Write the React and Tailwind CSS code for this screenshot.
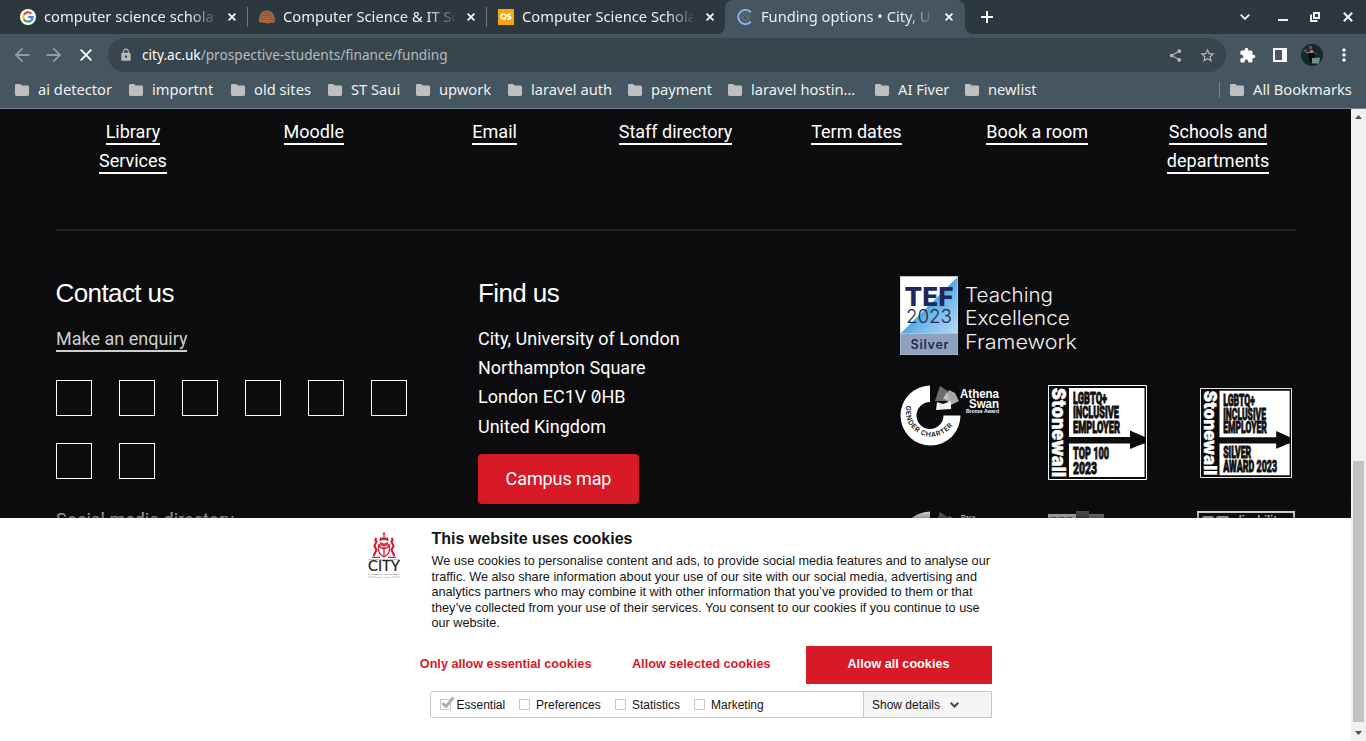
import React from "react";
import {
  MdArrowBack, MdArrowForward, MdClose, MdLock, MdShare, MdStarBorder,
  MdExtension, MdMoreVert,
} from "react-icons/md";

function GoogleIcon() {
  return (
    <svg viewBox="0 0 16 16" className="size-4 shrink-0">
      <circle cx="8" cy="8" r="8" fill="#fff" />
      <g fill="none" strokeWidth="2.1">
        <path d="M11.4 4.7A4.7 4.7 0 0 0 3.9 5.8" stroke="#ea4335" />
        <path d="M3.9 5.8a4.7 4.7 0 0 0 0 4.4" stroke="#fbbc05" />
        <path d="M3.9 10.2a4.7 4.7 0 0 0 7.1 1.4" stroke="#34a853" />
        <path d="M11 11.6A4.7 4.7 0 0 0 12.7 8.1H8.1" stroke="#4285f4" />
      </g>
    </svg>
  );
}

function ShellIcon() {
  return (
    <svg viewBox="0 0 16 16" className="size-4 shrink-0">
      <path d="M0 13C0 5 3 1.500 8 1.500S16 6 16 13.500L9 14.500Z" fill="#b86f45" />
      <g fill="none" stroke="#5d4030" strokeWidth=".6">
        <path d="M1 11.500q7-3 15 1M1 9.500q7-3 14 1M1.500 7.500q6-3 13 1M2.500 5.500q5-2.500 11 1M4 3.500q4-1.500 8 .5M3 13.500q6-2 11 .5" />
      </g>
    </svg>
  );
}

function QsIcon() {
  return (
    <svg viewBox="0 0 16 16" className="size-4 shrink-0">
      <path d="M0 0h16v16H0z" fill="#f9a50b" />
      <g fill="none" stroke="#fff" strokeWidth="1.500">
        <circle cx="5.500" cy="7.500" r="2.400" />
        <path d="M5.500 8.500l2 2M12.800 5.500c-3.600-1.100-4.200 1.300-1.900 1.900 3.300.8 1.900 3.300-1.900 2.200" />
      </g>
    </svg>
  );
}

function LoadingIcon() {
  return (
    <svg viewBox="0 0 16 16" className="size-4 shrink-0">
      <circle cx="8.500" cy="8" r="5" fill="#5b666d" />
      <path d="M6 6.500q2 .5 2 2t2 1.500M8.500 4.500l2 1.500" stroke="#414d55" fill="none" />
      <path d="M13.800 3.400A7.100 7.100 0 1 0 13.800 12.600" fill="none" stroke="#8ab4f8" strokeWidth="1.900" />
    </svg>
  );
}

const tabs = [
  { title: "computer science scholarships", Icon: GoogleIcon },
  { title: "Computer Science & IT Scholarships", Icon: ShellIcon, divided: true },
  { title: "Computer Science Scholarships", Icon: QsIcon, divided: true },
  { title: "Funding options • City, University", Icon: LoadingIcon, active: true },
];

function Tab({ title, Icon, active, divided }) {
  return (
    <div className={"relative flex h-[34px] shrink-0 items-center pl-3 " + (active ? "w-[240px] rounded-t-lg bg-[#455660]" : "w-[239px]")}>
      {divided && <span className="absolute left-0 top-[7px] h-5 w-px bg-[#6b757b]" />}
      {active && (
        <>
          <svg className="absolute -left-2 bottom-0 size-2" viewBox="0 0 8 8"><path d="M8 0v8H0a8 8 0 0 0 8-8" fill="#455660" /></svg>
          <svg className="absolute -right-2 bottom-0 size-2" viewBox="0 0 8 8"><path d="M0 0v8h8a8 8 0 0 1-8-8" fill="#455660" /></svg>
        </>
      )}
      <Icon />
      <span className="ml-2 w-[171px] overflow-hidden pb-px text-[14.700px] whitespace-nowrap text-[#eceeef] [mask-image:linear-gradient(to_right,black_145px,transparent_174px)]">{title}</span>
      <svg viewBox="0 0 8 8" className="ml-[13px] size-2"><path d="M.6.6l6.800 6.800M7.400.6L.6 7.400" stroke="#fff" strokeWidth="1.700" /></svg>
    </div>
  );
}

const bookmarks = [
  ["ai detector", "w-[114px]"], ["importnt", "w-[102px]"], ["old sites", "w-[97px]"],
  ["ST Saui", "w-[88px]"], ["upwork", "w-[92px]"], ["laravel auth", "w-[120px]"],
  ["payment", "w-[100px]"], ["laravel hostin…", "w-[147px]"], ["AI Fiver", "w-[90px]"], ["newlist", "w-[90px]"],
];

function Folder() {
  return (
    <svg viewBox="0 0 14 12" className="h-3 w-3.5 shrink-0">
      <path d="M1.400 0H5.300L6.800 1.600H12.600Q14 1.600 14 3V10.600Q14 12 12.600 12H1.400Q0 12 0 10.600V1.400Q0 0 1.400 0Z" fill="#bfbfc1" />
    </svg>
  );
}

function Browser() {
  return (
    <header className="h-[109px] border-b border-[#71848c] bg-[#455660] font-['Noto_Sans',sans-serif]">
      <div className="flex h-[34px] bg-[#2d383e] pl-2">
        {tabs.map((t) => <Tab key={t.title} {...t} />)}
        <div className="flex flex-1 items-center pl-4 text-[#f0f1f2]">
          <svg viewBox="0 0 12 12" className="size-3"><path d="M6 0v12M0 6h12" stroke="#fff" strokeWidth="2" /></svg>
          <svg viewBox="0 0 10 6" className="ml-[247px] h-1.5 w-2.5"><path d="M.7.7L5 5 9.300.7" fill="none" stroke="currentColor" strokeWidth="1.800" /></svg>
          <svg viewBox="0 0 10 10" className="ml-[28px] size-[10px]"><path d="M0 7h10v2H0z" fill="currentColor" /></svg>
          <svg viewBox="0 0 10 10" className="ml-[22px] size-[10px]" fill="none" stroke="currentColor" strokeWidth="2">
            <path d="M4 1h5v5H4zM1 2.500V9h6.500" />
          </svg>
          <svg viewBox="0 0 10 10" className="ml-[23px] size-[10px]"><path d="M.8.8l8.400 8.400M9.200.8L.8 9.200" stroke="currentColor" strokeWidth="2" /></svg>
        </div>
      </div>
      <div className="flex h-[38px] items-center pt-1 pl-[11px] text-[#929ca2]">
        <MdArrowBack className="size-[22px]" />
        <MdArrowForward className="ml-[10px] size-[22px]" />
        <svg viewBox="0 0 12 12" className="mr-[5px] ml-[15px] size-3"><path d="M.7.700l10.600 10.600M11.300.7L.7 11.300" stroke="#fff" strokeWidth="1.900" /></svg>
        <div className="ml-[11px] flex h-[34px] w-[1118px] items-center rounded-full bg-[#39454c] pr-[10px] pl-[11px] text-[#b4bbbf]">
          <MdLock className="size-[14px]" />
          <p className="ml-[9px] text-[13.650px]"><span className="text-white">city.ac.uk</span>/prospective-students/finance/funding</p>
          <MdShare className="ml-auto size-[15px]" />
          <MdStarBorder className="ml-[16px] size-[17px]" />
        </div>
        <div className="flex items-center text-white">
          <MdExtension className="ml-[13px] size-[17px]" />
          <svg viewBox="0 0 14 14" className="ml-[17px] size-3.5"><path d="M0 0h14v14H0zM2 2v10h7V2z" fill="currentColor" fillRule="evenodd" /></svg>
          <svg viewBox="0 0 22 22" className="ml-3.5 size-[22px]">
            <circle cx="11" cy="11" r="11" fill="#142a2c" />
            <path d="M2 6.500l4-2v2l-4 1zM8 2h3v3H8z" fill="#4c6364" />
            <path d="M3 7l5 1 3-1 5 3-4 1-5-1z" fill="#a0604a" />
            <path d="M7 9h7v9H8z" fill="#080f10" />
            <circle cx="10.500" cy="7.500" r="1.700" fill="#b97c68" />
            <path d="M11 14l8-.5-1 6h-7z" fill="#71908b" />
          </svg>
          <MdMoreVert className="ml-[11px] size-5" />
        </div>
      </div>
      <div className="flex h-9 items-center pl-[15px] text-[14.700px] leading-5 text-[#eef0f1]">
        {bookmarks.map(([name, width]) => (
          <div key={name} className={"flex shrink-0 items-center gap-[9px] whitespace-nowrap " + width}><Folder /><span className="pb-0.5">{name}</span></div>
        ))}
        <div className="ml-[164px] h-4 w-px bg-[#77868e]" />
        <div className="ml-[10px] flex items-center gap-[9px] whitespace-nowrap"><Folder /><span className="pb-0.5">All Bookmarks</span></div>
      </div>
    </header>
  );
}

function Tef() {
  return (
    <svg viewBox="0 0 180 79" className="block h-[79px] w-[180px]">
      <defs>
        <linearGradient id="tef" x1="0" y1="0" x2="1" y2="1">
          <stop offset="0" stopColor="#c4e2f5" /><stop offset=".35" stopColor="#2f95d8" />
          <stop offset=".62" stopColor="#6fb8e8" /><stop offset="1" stopColor="#b8daf3" />
        </linearGradient>
      </defs>
      <path d="M0 0h58v79H0z" fill="#b8bfc9" />
      <path d="M.5 1h57v56H.5z" fill="#fff" />
      <path d="M57.500 1v56H1z" fill="url(#tef)" />
      <path d="M.5 58h57v20.500H.5z" fill="#8fa2bd" />
      <g fontFamily="Inter, sans-serif" fill="#1f2858">
        <text x="4.500" y="29.500" fontSize="26" fontWeight="800" textLength="49" lengthAdjust="spacingAndGlyphs">TEF</text>
        <text x="6" y="47" fontSize="19" fontWeight="300" textLength="46" lengthAdjust="spacingAndGlyphs">2023</text>
        <text x="10.500" y="73" fontSize="12.500" fontWeight="600" textLength="38" lengthAdjust="spacing">Silver</text>
        <g fill="#f2f2f2" fontSize="19.500" fontWeight="300">
          <text x="65" y="26" textLength="88" lengthAdjust="spacingAndGlyphs">Teaching</text>
          <text x="65" y="49.300" textLength="105" lengthAdjust="spacingAndGlyphs">Excellence</text>
          <text x="65" y="72.700" textLength="112" lengthAdjust="spacingAndGlyphs">Framework</text>
        </g>
      </g>
    </svg>
  );
}

function Charter({ race }) {
  return (
    <svg viewBox="0 0 100 62" className="block h-[62px] w-[100px]">
      <path d="M30 0.500A30 30 0 1 0 60.500 30.500H43.500A13.500 13.500 0 1 1 30 17Z" fill="#fff" />
      {!race && (
        <>
          <path id="charter-arc" d="M6.400 20.500A25.600 25.600 0 0 0 55 36" fill="none" />
          <text fontFamily="Inter, sans-serif" fontSize="6.800" fontWeight="600" letterSpacing=".65" fill="#111">
            <textPath href="#charter-arc">GENDER CHARTER</textPath>
          </text>
        </>
      )}
      <path d="M40 1l9 6-2 9H35z" fill="#6d6d6d" />
      <path d="M49 5l6 3 4 8-8 4-6-6z" fill="#a8a8a8" />
      <path d="M37 17l6 2 8-3v8l-15 1z" fill="#f2f2f2" />
      <path d="M47 7l-4 7 6 1z" fill="#c7c7c7" />
      <g fontFamily="'Liberation Sans', sans-serif" fontWeight="700" fill="#fff">
        {race ? (
          <text x="61" y="8" fontSize="6">Race</text>
        ) : (
          <>
            <text x="60" y="12.500" fontSize="12" textLength="39" lengthAdjust="spacingAndGlyphs">Athena</text>
            <text x="69" y="22.500" fontSize="12" textLength="30" lengthAdjust="spacingAndGlyphs">Swan</text>
            <text x="66" y="27.500" fontSize="5" textLength="33" lengthAdjust="spacingAndGlyphs">Bronze Award</text>
          </>
        )}
      </g>
    </svg>
  );
}

function Stonewall({ lines, className }) {
  const all = [["LGBTQ+", 34, 18.500], ["INCLUSIVE", 46, 33.300], ["EMPLOYER", 47, 48], ...lines];
  return (
    <svg viewBox="0 0 99 95" preserveAspectRatio="none" className={className}>
      <path d="M.5.5h98v94H.5z" fill="#0c0c0e" stroke="#fff" />
      <path d="M21 3h75.500v49H21zM21 58.500h75.500V92H21z" fill="#fff" />
      <path d="M82 45.500l15 6.500v6L82 64z" fill="#0c0c0e" />
      <text transform="translate(3.800 3) rotate(90)" fontFamily="Inter, sans-serif" fontSize="19" fontWeight="900" fill="#fff" stroke="#fff" strokeWidth=".3" textLength="89" lengthAdjust="spacingAndGlyphs">Stonewall</text>
      <g fontFamily="Roboto, sans-serif" fontSize="17.200" fontWeight="900" fill="#111" stroke="#111" strokeWidth=".9">
        {all.map(([t, w, y]) => <text key={t} x="25" y={y} textLength={w} lengthAdjust="spacingAndGlyphs">{t}</text>)}
      </g>
    </svg>
  );
}

const links = ["Library Services", "Moodle", "Email", "Staff directory", "Term dates", "Book a room", "Schools and departments"];
const wraps = ["px-10", "", "", "", "", "", "px-8"];

function Footer() {
  return (
    <main className="h-[409px] overflow-hidden bg-[#0c0c0e] font-['Roboto',sans-serif] text-[18px] leading-[29px] text-white">
      <nav className="ml-[42.500px] grid w-[1266px] grid-cols-7 pt-2 text-center">
        {links.map((l, i) => (
          <div key={l} className={wraps[i]}><a className="border-b-2 border-white pb-px">{l}</a></div>
        ))}
      </nav>
      <div className="mt-[54px] ml-14 h-0.5 w-[1240px] bg-[#202022]" />
      <div className="ml-14 grid w-[1266px] grid-cols-3">
        <section>
          <h2 className="mt-[47px] -ml-[0.500px] font-['Liberation_Sans',sans-serif] text-[26px] leading-[30px] tracking-[-0.6px]">Contact us</h2>
          <p className="mt-4"><a className="border-b-2 border-[#cfcfcf] pb-px text-[#cfcfcf]">Make an enquiry</a></p>
          <div className="mt-[27px] flex w-[360px] flex-wrap gap-[27px]">
            {Array.from({ length: 8 }, (_, i) => <a key={i} className="size-9 border border-white" />)}
          </div>
          <p className="mt-[26px] text-[#cfcfcf]">Social media directory</p>
        </section>
        <section>
          <h2 className="mt-[47px] font-['Liberation_Sans',sans-serif] text-[26px] leading-[30px] tracking-[-0.6px]">Find us</h2>
          <address className="mt-4 leading-[29.200px] not-italic">
            City, University of London<br />Northampton Square<br />London EC1V <span className="font-['Inter'] text-[17px] leading-none slashed-zero">0</span>HB<br />United Kingdom
          </address>
          <button className="mt-[13.200px] block h-[50px] w-[161px] rounded-[4px] bg-[#d81926] pb-0.5 tracking-[-0.1px]">Campus map</button>
        </section>
        <section className="pt-[45px]">
          <Tef />
          <div className="mt-[30px] flex h-[126px] items-start">
            <Charter />
            <Stonewall className="ml-12 h-[95px] w-[99px]" lines={[["TOP 100", 36, 73.500], ["2023", 24, 89]]} />
            <Stonewall className="mt-[3px] ml-[53px] h-[90px] w-[92px]" lines={[["SILVER", 30, 73.500], ["AWARD 2023", 58, 89]]} />
          </div>
          <div className="flex h-24 items-start">
            <Charter race />
            <svg viewBox="0 0 56 60" className="ml-12 h-[60px] w-14">
              <path d="M0 3h28v57H0z" fill="#d8d8d8" /><path d="M41 3h15v57H41z" fill="#888" /><path d="M28 0h13v60H28z" fill="#555" />
              <path d="M3 6h5v9H3zM11 6h5v9h-5zM19 6h5v9h-5z" fill="#777" />
            </svg>
            <svg viewBox="0 0 98 60" className="ml-[93px] h-[60px] w-[98px]">
              <path d="M1 1h96v58H1z" fill="none" stroke="#fff" strokeWidth="2" />
              <rect x="5" y="5" width="12" height="14" rx="2" fill="#ddd" /><rect x="19" y="5" width="13" height="14" rx="2" fill="#ddd" />
              <text x="38" y="15" fontFamily="'Liberation Sans', sans-serif" fontWeight="700" fontSize="14" fill="#fff" textLength="48" lengthAdjust="spacingAndGlyphs">disability</text>
            </svg>
          </div>
        </section>
      </div>
    </main>
  );
}

function CityLogo() {
  return (
    <svg viewBox="0 0 32 46" className="h-[46px] w-8 shrink-0">
      <g fill="none" stroke="#d4213a">
        <path d="M16 0v6M14.500 2h3" strokeWidth="1.200" />
        <path d="M12 6.500h8M11.500 8.500q4.500-3 9 0" strokeWidth="1.800" />
        <path d="M10.500 13h11v4q0 5-5.500 8-5.500-3-5.500-8zM16 13v11" strokeWidth="1.300" />
        <path d="M8.500 6q-2 2 0 3.500L6.500 14l2 4-3 6M23.500 6q2 2 0 3.500l2 4.500-2 4 3 6" strokeWidth="2.200" />
        <path d="M12 11l4 1.500 4-1.500M10 14l6 3 6-3" strokeWidth="1.500" />
        <path d="M4 25.300h8M20 25.300h8" strokeWidth="1.200" />
        <path d="M0 27.500h32M0 45h8M24 45h8" stroke="#e8909b" strokeWidth=".7" />
      </g>
      <text x="0" y="39" fontFamily="Lato, sans-serif" fontSize="14.500" fill="#222" stroke="#222" strokeWidth=".2" textLength="32" lengthAdjust="spacingAndGlyphs">CITY</text>
      <text x="0" y="42.700" fontFamily="Lato, sans-serif" fontSize="2.600" fill="#555" textLength="32" lengthAdjust="spacingAndGlyphs">UNIVERSITY OF LONDON</text>
      <text x="9" y="46" fontFamily="Lato, sans-serif" fontSize="2.600" fill="#d4213a" textLength="14">EST 1894</text>
    </svg>
  );
}

const options = [["Essential", "w-[79px]"], ["Preferences", "w-24"], ["Statistics", "w-[79px]"], ["Marketing", "w-20"]];

function CookieBanner() {
  return (
    <section className="relative h-[223px] bg-white pt-[14px] pl-[368px] font-['Liberation_Sans',sans-serif] text-[#141414] shadow-[0_0_15px_rgba(20,20,20,0.9)] [clip-path:inset(-40px_0_0_0)]">
      <div className="flex h-[114px]">
        <CityLogo />
        <div className="ml-[31.500px] w-[565px]">
          <h1 className="-mt-[3px] text-[16px] leading-[19px] font-bold">This website uses cookies</h1>
          <p className="mt-[6px] text-[12.670px] leading-[15.600px] whitespace-nowrap">
            We use cookies to personalise content and ads, to provide social media features and to analyse our<br />
            traffic. We also share information about your use of our site with our social media, advertising and<br />
            analytics partners who may combine it with other information that you’ve provided to them or that<br />
            they’ve collected from your use of their services. You consent to our cookies if you continue to use<br />
            our website.
          </p>
        </div>
      </div>
      <div className="ml-[51.800px] flex h-[38px] text-[12.670px] leading-9 font-bold whitespace-nowrap text-[#d81926]">
        <button className="w-[212.200px] pb-0.5 text-left">Only allow essential cookies</button>
        <button className="w-[174px] pb-0.5 text-left">Allow selected cookies</button>
        <button className="w-[186px] bg-[#d81926] pr-px pb-0.5 text-white">Allow all cookies</button>
      </div>
      <div className="mt-[7px] ml-[62px] flex h-[27px] w-[562px] rounded-l-[3px] border border-[#c8c8c8] text-[12px]">
        <div className="flex w-[433px] items-center border-r border-[#c8c8c8] pl-[9px]">
          {options.map(([o, w], i) => (
            <label key={o} className={"flex items-center " + w}>
              <span className={"relative size-[11px] border border-[#c8c8c8] " + (i ? "mr-[6px]" : "mr-[5.500px]")}>
                {i === 0 && (
                  <svg viewBox="0 0 14 13" className="absolute -top-[4px] left-0 h-[13px] w-3.5"><path d="M1.500 7l3.500 3.500L12.500 1.500" fill="none" stroke="#b0b0b0" strokeWidth="3" /></svg>
                )}
              </span>
              {o}
            </label>
          ))}
        </div>
        <div className="flex flex-1 items-center bg-[#f4f4f4] pl-2">
          Show details
          <svg viewBox="0 0 9 6" className="ml-[10px] h-1.5 w-[9px]"><path d="M.7.7l3.800 3.800L8.300.7" fill="none" stroke="#484848" strokeWidth="2" /></svg>
        </div>
      </div>
    </section>
  );
}

function Scrollbar() {
  return (
    <aside className="flex w-[15px] flex-col items-center bg-[#f1f1f1]">
      <svg viewBox="0 0 7 4" className="mt-[6px] h-1 w-[7px]"><path d="M0 4L3.500 0 7 4z" fill="#505050" /></svg>
      <div className="mt-[342px] h-[261px] w-[11px] bg-[#c1c1c1]" />
      <svg viewBox="0 0 7 4" className="mt-[9px] h-1 w-[7px]"><path d="M0 0l3.500 4L7 0z" fill="#505050" /></svg>
    </aside>
  );
}

export default function App() {
  return (
    <div className="h-[741px] w-[1366px] overflow-hidden bg-white">
      <Browser />
      <div className="flex h-[632px]">
        <div className="w-[1351px]"><Footer /><CookieBanner /></div>
        <Scrollbar />
      </div>
    </div>
  );
}
